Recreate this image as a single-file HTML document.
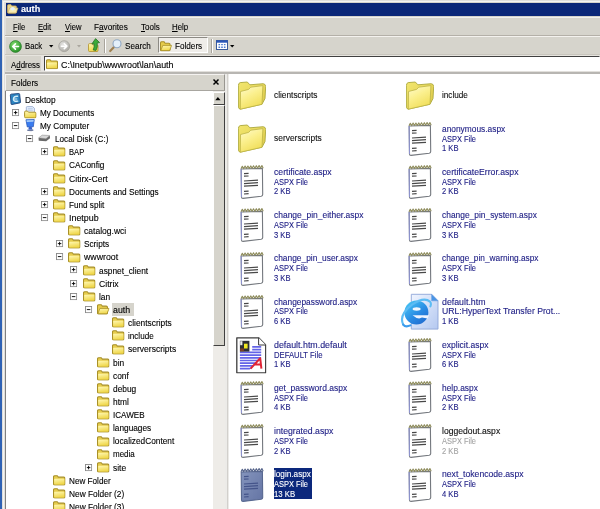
<!DOCTYPE html>
<html><head><meta charset="utf-8"><title>auth</title>
<style>
*{box-sizing:border-box;margin:0;padding:0}
html,body{width:600px;height:509px;overflow:hidden}
body{position:relative;background:#d6d4cc;font-family:"Liberation Sans",sans-serif;font-size:9px;color:#000;line-height:1}
#w{position:absolute;left:0;top:0;width:600px;height:509px;will-change:transform}
.a{position:absolute}
.t{-webkit-text-stroke:0.12px;position:absolute;white-space:pre;line-height:10px;height:10px;transform-origin:0 50%}
svg{position:absolute;overflow:visible}
u{text-decoration:underline;text-underline-offset:1px}
</style></head>
<body>
<div id="w">
<svg width="0" height="0" style="left:0;top:0">
<defs>
<linearGradient id="gf" x1="0" y1="0" x2="0.3" y2="1"><stop offset="0" stop-color="#fff8b4"/><stop offset="1" stop-color="#f0d84e"/></linearGradient>
<linearGradient id="gF" x1="0" y1="0" x2="0.5" y2="1"><stop offset="0" stop-color="#fffbd0"/><stop offset="0.5" stop-color="#fbf08e"/><stop offset="1" stop-color="#f1df5c"/></linearGradient>
<linearGradient id="gB" x1="0" y1="0" x2="1" y2="1"><stop offset="0" stop-color="#f2e66e"/><stop offset="1" stop-color="#dcc848"/></linearGradient>
<linearGradient id="gP" x1="0" y1="0" x2="1" y2="1"><stop offset="0" stop-color="#f0f5ff"/><stop offset="1" stop-color="#b4c8f0"/></linearGradient>
<linearGradient id="gE" x1="0.1" y1="0" x2="0.9" y2="1"><stop offset="0" stop-color="#48c8f4"/><stop offset="0.55" stop-color="#2a8ce4"/><stop offset="1" stop-color="#1f66cc"/></linearGradient>
<linearGradient id="gS" x1="0" y1="0" x2="1" y2="1"><stop offset="0" stop-color="#8494bc"/><stop offset="1" stop-color="#6474a4"/></linearGradient>
<radialGradient id="gg" cx="0.4" cy="0.35" r="0.7"><stop offset="0" stop-color="#86e070"/><stop offset="1" stop-color="#1f8a22"/></radialGradient>
<radialGradient id="gy" cx="0.4" cy="0.35" r="0.7"><stop offset="0" stop-color="#e6e6e4"/><stop offset="1" stop-color="#a8a6a0"/></radialGradient>
<symbol id="fs" viewBox="0 0 13 11"><path d="M0.5 2.2 Q0.5 0.7 1.9 0.7 L4.4 0.7 L5.6 2.2 L11.2 2.2 Q12.5 2.2 12.5 3.5 L12.5 9 Q12.5 10.5 11.1 10.5 L1.9 10.5 Q0.5 10.5 0.5 9 Z" fill="#e6cc4c" stroke="#a89028" stroke-width="1.1"/><path d="M1.2 4.6 Q1.2 3.8 2 3.8 L11 3.8 Q11.8 3.8 11.8 4.6 L11.8 9 Q11.8 9.8 11 9.8 L2 9.8 Q1.2 9.8 1.2 9 Z" fill="url(#gf)"/></symbol>
<symbol id="fo" viewBox="0 0 13 11"><path d="M0.5 2.2 Q0.5 0.7 1.9 0.7 L4.4 0.7 L5.6 2.2 L9.6 2.2 Q10.9 2.2 10.9 3.5 L10.9 9 Q10.9 10.5 9.5 10.5 L1.9 10.5 Q0.5 10.5 0.5 9 Z" fill="#e6cc4c" stroke="#a89028" stroke-width="1.1"/><path d="M3 4.6 L12.6 4.6 L10.4 10.2 L0.9 10.2 Z" fill="url(#gf)" stroke="#a89028" stroke-width="0.8" stroke-linejoin="round"/></symbol>
<symbol id="fl" viewBox="0 0 28 29"><path d="M0.4 4.4 Q0.5 2 2.2 1.6 L9.3 1 L11.9 3.8 L25.2 2.7 Q27.5 2.9 27.7 5.4 L27 17.5 L24 23.2 L2.2 28.2 Q0.5 27.4 0.4 26.4 Z" fill="url(#gB)" stroke="#aca83c" stroke-width="0.9" stroke-linejoin="round"/><path d="M2.5 10.5 L10.6 8.4 L12.8 6.2 L24.9 4.6 L24 23.3 L2.3 28.2 Z" fill="url(#gF)" stroke="#bcb448" stroke-width="0.8" stroke-linejoin="round"/></symbol>
<symbol id="np" viewBox="0 0 24 34"><path d="M1.2 4 L22.4 3.4 L22.7 29.6 Q22.7 31 21.2 31.3 L3 33.4 Q1.5 33.4 1.5 32 Z" fill="#fff" stroke="#74787e" stroke-width="1.1" stroke-linejoin="round"/><path d="M1.1 4 L1.5 32" stroke="#8c92cc" stroke-width="1.1"/><path d="M1 3.8 l1.3 -2.6 l1.4 2.4 l1.4 -2.5 l1.4 2.4 l1.4 -2.5 l1.4 2.4 l1.4 -2.5 l1.4 2.4 l1.4 -2.5 l1.4 2.4 l1.4 -2.5 l1.4 2.4 l1.4 -2.5 l1.4 2.4 l1.4 -2.4 l1.3 2.6" stroke="#8e8c5c" stroke-width="1.1" fill="none" stroke-linejoin="round"/><path d="M4 8.6 l4.6 -0.2 M4 11.2 l4.6 -0.2 M4 16 l14 -0.9 M4 18.6 l14 -0.9 M4 21.2 l14 -0.9 M4 26.4 l4.6 -0.3 M4 29 l4.6 -0.3" stroke="#484848" stroke-width="1.25" fill="none"/></symbol>
<symbol id="nps" viewBox="0 0 24 34"><path d="M1.2 4 L22.4 3.4 L22.7 29.6 Q22.7 31 21.2 31.3 L3 33.4 Q1.5 33.4 1.5 32 Z" fill="url(#gS)" stroke="#586890" stroke-width="1.1" stroke-linejoin="round"/><path d="M1 3.8 l1.3 -2.6 l1.4 2.4 l1.4 -2.5 l1.4 2.4 l1.4 -2.5 l1.4 2.4 l1.4 -2.5 l1.4 2.4 l1.4 -2.5 l1.4 2.4 l1.4 -2.5 l1.4 2.4 l1.4 -2.5 l1.4 2.4 l1.4 -2.4 l1.3 2.6" stroke="#56648a" stroke-width="1.1" fill="none" stroke-linejoin="round"/><path d="M4 8.6 l4.6 -0.2 M4 11.2 l4.6 -0.2 M4 16 l14 -0.9 M4 18.6 l14 -0.9 M4 21.2 l14 -0.9 M4 26.4 l4.6 -0.3 M4 29 l4.6 -0.3" stroke="#44548a" stroke-width="1.25" fill="none"/></symbol>
<symbol id="pl" viewBox="0 0 7 7"><rect x="0.5" y="0.5" width="6" height="6" fill="#fff" stroke="#8a8a8a" stroke-width="0.9"/><path d="M1.8 3.5 h3.4 M3.5 1.8 v3.4" stroke="#000" stroke-width="0.9"/></symbol>
<symbol id="mi" viewBox="0 0 7 7"><rect x="0.5" y="0.5" width="6" height="6" fill="#fff" stroke="#8a8a8a" stroke-width="0.9"/><path d="M1.8 3.5 h3.4" stroke="#000" stroke-width="0.9"/></symbol>
<symbol id="desk" viewBox="0 0 13 13"><path d="M1.4 2.2 Q1.3 1.4 2.2 1.2 L10 0.5 Q10.9 0.5 11 1.4 L11.9 9.2 Q12 10 11.2 10.2 L3 11.9 Q2.2 12 2.1 11.2 Z" fill="#2c84c0" stroke="#1c3f78" stroke-width="0.9" stroke-linejoin="round"/><path d="M8.8 3.4 Q4.6 3.2 4.6 6.4 Q4.8 9.2 9 8.4" stroke="#d4eefa" stroke-width="1.5" fill="none" stroke-linecap="round"/><path d="M5 6.2 H8.6" stroke="#d4eefa" stroke-width="1.1"/></symbol>
<symbol id="docs" viewBox="0 0 13 13"><path d="M2.4 1.4 Q2.4 0.6 3.4 0.6 L8.8 0.6 L10.8 2.4 V8 H2.4 Z" fill="#e4eefc" stroke="#90a4cc" stroke-width="0.8"/><path d="M4 2.8 H9 M4 4.4 H9" stroke="#a8bce0" stroke-width="0.7"/><path d="M0.6 6.4 Q0.6 5.2 1.8 5.2 L3.6 5.2 L4.6 6.4 L11.2 6.4 Q12.4 6.4 12.4 7.6 L12.4 11 Q12.4 12.3 11.2 12.3 L1.8 12.3 Q0.6 12.3 0.6 11 Z" fill="url(#gf)" stroke="#a89028" stroke-width="1"/></symbol>
<symbol id="comp" viewBox="0 0 13 13"><path d="M2 0.8 L10.6 0.6 L9.6 8 L3.4 8.2 Z" fill="#3a7cf0" stroke="#2858b8" stroke-width="0.8" stroke-linejoin="round"/><path d="M2.6 1.2 L10 1 L9.8 2.8 L2.9 3 Z" fill="#a8ccf8"/><path d="M5 8.2 L4.4 11 H8.6 L8 8.2 Z" fill="#3a62c8"/><path d="M3.2 11.4 Q6.4 12.8 9.6 11.2" stroke="#6c7aa0" stroke-width="1.2" fill="none"/></symbol>
<symbol id="disk" viewBox="0 0 13 13"><path d="M0.6 6.4 L4.4 3.6 L12.2 4 L12.4 6.4 L8.4 9.6 L0.8 9 Z" fill="#6a6a6a"/><path d="M0.6 6 L4.4 3.2 L12.2 3.6 L8.2 7 Z" fill="#d8d8d8" stroke="#8a8a8a" stroke-width="0.5"/></symbol>
<symbol id="ie" viewBox="0 0 40 38"><path d="M11.3 1.3 H31.6 L38 7.8 V36.1 H11.3 Z" fill="url(#gP)" stroke="#8ea6d8" stroke-width="0.9"/><path d="M31.6 1.3 V7.8 H38 Z" fill="#4a94e4" stroke="#6aa0e0" stroke-width="0.6"/><circle cx="16.4" cy="19.6" r="12" fill="url(#gE)"/><ellipse cx="16.6" cy="16" rx="4" ry="1.7" fill="#f2f8ff"/><path d="M12.6 22.2 H29 L27.6 25.4 L22 24.6 Q18 27 12.6 22.2 Z" fill="#eef4ff"/><path d="M28.8 22 L40 21 L40 27 L27.4 25.6 Z" fill="url(#gP)" opacity="0"/><path d="M3.2 31.6 Q-1.5 22 12 11.6 Q24 3.4 30 8.6 Q31.6 10.4 30.4 13.4" fill="none" stroke="#5cbcf4" stroke-width="2.1" stroke-linecap="round"/><path d="M3.2 31.6 Q5.4 34.6 10.4 32.4" fill="none" stroke="#3c9cec" stroke-width="2.1" stroke-linecap="round"/></symbol>
<symbol id="df" viewBox="0 0 30.5 36.6"><path d="M0.8 0.8 H22.6 L29.7 8 V35.8 H0.8 Z" fill="#fff" stroke="#3c3c3c" stroke-width="1.3" stroke-linejoin="round"/><path d="M22.6 0.8 V8 H29.7" fill="#fff" stroke="#3c3c3c" stroke-width="1"/><path d="M16.2 9.9 H25.2 M16.2 12.6 H25.2 M3.9 15.3 H25.2 M3.9 18.1 H25.2 M3.9 20.8 H25.2 M3.9 23.5 H25.2 M3.9 26.2 H25.2 M3.9 28.9 H25.2 M3.9 31.7 H25.2 " stroke="#6464e8" stroke-width="1.7"/><path d="M13 33.6 L27 19 L27.4 33.6 Z" fill="#fff"/><rect x="3.9" y="3.8" width="9.5" height="10.8" fill="#2c2c34"/><rect x="8" y="6.7" width="3.6" height="4.8" fill="#f0e820"/><rect x="4.2" y="4.2" width="2.2" height="4" fill="#e8e8e8"/><rect x="4.1" y="11.4" width="3.8" height="2.8" fill="#7c4020"/><path d="M14.6 31.6 L24.2 21.2 L25.4 31.6 M18.6 27.6 H25" stroke="#e02436" stroke-width="2" fill="none" stroke-linejoin="round"/></symbol>
</defs></svg>
<div class="a" style="left:0px;top:0px;width:1.5px;height:509px;background:#2f62b4;"></div>
<div class="a" style="left:1.5px;top:0px;width:4px;height:509px;background:#e0dfdc;"></div>
<div class="a" style="left:1.5px;top:0px;width:598.5px;height:2.4px;background:#e0dfdc;"></div>
<div class="a" style="left:2.6px;top:1px;width:597.4px;height:1px;background:#f4f4f2;"></div>
<div class="a" style="left:2.6px;top:1px;width:1.2px;height:508px;background:#f4f4f2;"></div>
<div class="a" style="left:5.5px;top:2.5px;width:594.5px;height:13.5px;background:#0b2778;"></div>
<div class="t" style="left:21.1px;top:4px;transform:scaleX(0.928);color:#fff;font-weight:bold;font-size:9.8px">auth</div>
<svg style="left:7px;top:4px" width="11.4" height="9.6" viewBox="0 0 13 11"><path d="M0.5 2.2 Q0.5 0.7 1.9 0.7 L4.4 0.7 L5.6 2.2 L9.6 2.2 Q10.9 2.2 10.9 3.5 L10.9 9 Q10.9 10.5 9.5 10.5 L1.9 10.5 Q0.5 10.5 0.5 9 Z" fill="#ecd88c" stroke="#c8a85c" stroke-width="0.9"/><path d="M3 4.6 L12.6 4.6 L10.4 10.2 L0.9 10.2 Z" fill="#f6eab0" stroke="#d0b060" stroke-width="0.7" stroke-linejoin="round"/><ellipse cx="6.4" cy="5.4" rx="2.6" ry="2" fill="#e4f0fc"/></svg>
<div class="a" style="left:5.5px;top:17px;width:594.5px;height:1.2px;background:#f2f1ee;"></div>
<div class="t" style="left:13.3px;top:22.4px;transform:scaleX(0.840);"><u>F</u>ile</div>
<div class="t" style="left:38.2px;top:22.4px;transform:scaleX(0.850);"><u>E</u>dit</div>
<div class="t" style="left:64.7px;top:22.4px;transform:scaleX(0.847);"><u>V</u>iew</div>
<div class="t" style="left:93.5px;top:22.4px;transform:scaleX(0.913);">F<u>a</u>vorites</div>
<div class="t" style="left:141.05px;top:22.4px;transform:scaleX(0.890);"><u>T</u>ools</div>
<div class="t" style="left:172.3px;top:22.4px;transform:scaleX(0.875);"><u>H</u>elp</div>
<div class="a" style="left:5px;top:35px;width:595px;height:1px;background:#b4b0a8;"></div>
<div class="a" style="left:5px;top:36px;width:595px;height:1px;background:#f4f2ee;"></div>
<div class="a" style="left:5px;top:53.5px;width:595px;height:1px;background:#c8c5bd;"></div>
<div class="a" style="left:5px;top:54.5px;width:595px;height:1px;background:#e6e4de;"></div>
<svg style="left:8.5px;top:39.5px" width="13" height="13" viewBox="0 0 14 14"><circle cx="7" cy="7" r="6.4" fill="url(#gg)" stroke="#2c7a2c" stroke-width="0.7"/><path d="M10.2 7 H4.6 M6.9 4.2 L4 7 L6.9 9.8" stroke="#fff" stroke-width="1.8" fill="none" stroke-linecap="round" stroke-linejoin="round"/></svg>
<div class="t" style="left:24.6px;top:41px;transform:scaleX(0.859);">Back</div>
<svg style="left:48.6px;top:44.8px" width="4.4" height="2.6" viewBox="0 0 5 3"><path d="M0 0 H5 L2.5 3 Z" fill="#000"/></svg>
<svg style="left:58.3px;top:39.8px" width="12.4" height="12.4" viewBox="0 0 14 14"><circle cx="7" cy="7" r="6.2" fill="url(#gy)" stroke="#9c9a94" stroke-width="0.7"/><path d="M3.8 7 H9.4 M7.1 4.2 L10 7 L7.1 9.8" stroke="#fff" stroke-width="1.8" fill="none" stroke-linecap="round" stroke-linejoin="round"/></svg>
<svg style="left:77.2px;top:44.8px" width="4" height="2.4" viewBox="0 0 5 3"><path d="M0 0 H5 L2.5 3 Z" fill="#aaa69e"/></svg>
<svg style="left:87.6px;top:38.2px" width="12" height="14" viewBox="0 0 12 14"><path d="M0.5 6.6 Q0.5 5.6 1.5 5.6 L3.8 5.6 L4.8 6.8 L9 6.8 Q10 6.8 10 7.8 L10 12.5 Q10 13.5 9 13.5 L1.5 13.5 Q0.5 13.5 0.5 12.5 Z" fill="url(#gf)" stroke="#b0902c" stroke-width="0.8"/><path d="M5.2 12 Q6.6 9 6 5.6 L3.8 6 L7.6 0.6 L11.6 4.6 L9.2 5 Q10 9 8 12.4 Z" fill="#3cab3a" stroke="#1f6a1f" stroke-width="0.7"/></svg>
<div class="a" style="left:104.3px;top:38.5px;width:1px;height:14px;background:#a8a49c;"></div>
<div class="a" style="left:105.3px;top:38.5px;width:1px;height:14px;background:#fff;"></div>
<svg style="left:109.3px;top:38.6px" width="13" height="13" viewBox="0 0 13 13"><path d="M1.2 12 L5.5 7.6" stroke="#a08050" stroke-width="2.2" stroke-linecap="round"/><circle cx="8" cy="4.8" r="4" fill="#e4f0fa" stroke="#90a8c4" stroke-width="1.1"/></svg>
<div class="t" style="left:124.8px;top:41px;transform:scaleX(0.901);">Search</div>
<div class="a" style="left:157.5px;top:37px;width:50px;height:16px;background:#efede9;border:1px solid;border-color:#8c8a84 #fff #fff #8c8a84"></div>
<svg style="left:159.5px;top:41px" width="12" height="10.5"><use href="#fo" width="12" height="10.5"/></svg>
<div class="t" style="left:175.3px;top:41px;transform:scaleX(0.906);">Folders</div>
<div class="a" style="left:211px;top:38.5px;width:1px;height:14px;background:#a8a49c;"></div>
<div class="a" style="left:212px;top:38.5px;width:1px;height:14px;background:#fff;"></div>
<svg style="left:216.2px;top:40px" width="12" height="10" viewBox="0 0 12 10"><rect x="0.5" y="0.5" width="11" height="9" fill="#fff" stroke="#3a5a9a" stroke-width="1"/><rect x="0.5" y="0.5" width="11" height="2.2" fill="#2a56b8"/><path d="M2.5 4.6 h1.6 M5.2 4.6 h1.6 M7.9 4.6 h1.6 M2.5 7.2 h1.6 M5.2 7.2 h1.6 M7.9 7.2 h1.6" stroke="#4a78d0" stroke-width="1.4"/></svg>
<svg style="left:229.6px;top:44.8px" width="4.4" height="2.6" viewBox="0 0 5 3"><path d="M0 0 H5 L2.5 3 Z" fill="#000"/></svg>
<div class="t" style="left:10.5px;top:59.5px;transform:scaleX(0.878);">A<u>d</u>dress</div>
<div class="a" style="left:40.8px;top:55.5px;width:3.4px;height:16px;background:#e6e4e2;"></div>
<div class="a" style="left:43.8px;top:55.7px;width:556.2px;height:15.3px;background:#fff;border:1.1px solid;border-color:#404040 #fff #fff #404040"></div>
<div class="a" style="left:5px;top:71px;width:595px;height:1px;background:#e2e0dc;"></div>
<div class="a" style="left:5px;top:72px;width:595px;height:2px;background:#b8b6b2;"></div>
<svg style="left:46px;top:59px" width="12" height="10.3"><use href="#fs" width="12" height="10.3"/></svg>
<div class="t" style="left:60.5px;top:59.6px;transform:scaleX(0.991);">C:\Inetpub\wwwroot\lan\auth</div>
<div class="a" style="left:5px;top:74px;width:220px;height:16.8px;background:#d6d4cc;border:1px solid;border-color:#f4f2f0 #989690 #a8a6a0 #f4f2f0"></div>
<div class="t" style="left:11.1px;top:78.4px;transform:scaleX(0.906);">Folders</div>
<svg style="left:213.2px;top:79px" width="6" height="6" viewBox="0 0 6 6"><path d="M0.5 0.5 L5.5 5.5 M5.5 0.5 L0.5 5.5" stroke="#000" stroke-width="1.45"/></svg>
<div class="a" style="left:5px;top:91px;width:207.5px;height:418px;background:#fff;border-left:1px solid #808080"></div>
<div class="a" style="left:212.5px;top:91px;width:12px;height:418px;background:#eeece8;"></div>
<div class="a" style="left:212.5px;top:92px;width:12px;height:12.5px;background:#d6d4cc;border:1px solid;border-color:#fff #404040 #404040 #fff"></div>
<svg style="left:215.3px;top:97.4px" width="5.8" height="3.2" viewBox="0 0 5 3"><path d="M0 3 H5 L2.5 0 Z" fill="#000"/></svg>
<div class="a" style="left:212.5px;top:104.5px;width:12px;height:241px;background:#d6d4cc;border:1px solid;border-color:#fff #404040 #404040 #fff"></div>
<div class="a" style="left:225px;top:74px;width:4.2px;height:435px;background:#ecebe8;"></div>
<div class="a" style="left:227px;top:74px;width:1px;height:435px;background:#d2d0cc;"></div>
<div class="a" style="left:229.2px;top:74px;width:370.8px;height:435px;background:#fff;"></div>
<svg style="left:8.9px;top:93px" width="12.6" height="12.6"><use href="#desk" width="12.6" height="12.6"/></svg>
<div class="t" style="left:25.1px;top:94.7px;transform:scaleX(0.926);">Desktop</div>
<svg style="left:11.6px;top:108.74px" width="7.2" height="7.2"><use href="#pl" width="7.2" height="7.2"/></svg>
<svg style="left:23.6px;top:106.14px" width="12.6" height="12.6"><use href="#docs" width="12.6" height="12.6"/></svg>
<div class="t" style="left:39.8px;top:107.84px;transform:scaleX(0.903);">My Documents</div>
<svg style="left:11.6px;top:121.88px" width="7.2" height="7.2"><use href="#mi" width="7.2" height="7.2"/></svg>
<svg style="left:23.6px;top:119.28px" width="12.6" height="12.6"><use href="#comp" width="12.6" height="12.6"/></svg>
<div class="t" style="left:39.8px;top:120.98px;transform:scaleX(0.911);">My Computer</div>
<svg style="left:26.3px;top:135.02px" width="7.2" height="7.2"><use href="#mi" width="7.2" height="7.2"/></svg>
<svg style="left:38.3px;top:132.42px" width="12.6" height="12.6"><use href="#disk" width="12.6" height="12.6"/></svg>
<div class="t" style="left:54.5px;top:134.12px;transform:scaleX(0.905);">Local Disk (C:)</div>
<svg style="left:41px;top:148.16px" width="7.2" height="7.2"><use href="#pl" width="7.2" height="7.2"/></svg>
<svg style="left:53.3px;top:146.46px" width="12.5" height="10.6"><use href="#fs" width="12.5" height="10.6"/></svg>
<div class="t" style="left:69.2px;top:147.26px;transform:scaleX(0.844);">BAP</div>
<svg style="left:53.3px;top:159.6px" width="12.5" height="10.6"><use href="#fs" width="12.5" height="10.6"/></svg>
<div class="t" style="left:69.2px;top:160.4px;transform:scaleX(0.919);">CAConfig</div>
<svg style="left:53.3px;top:172.74px" width="12.5" height="10.6"><use href="#fs" width="12.5" height="10.6"/></svg>
<div class="t" style="left:69.2px;top:173.54px;transform:scaleX(0.956);">Citirx-Cert</div>
<svg style="left:41px;top:187.58px" width="7.2" height="7.2"><use href="#pl" width="7.2" height="7.2"/></svg>
<svg style="left:53.3px;top:185.88px" width="12.5" height="10.6"><use href="#fs" width="12.5" height="10.6"/></svg>
<div class="t" style="left:69.2px;top:186.68px;transform:scaleX(0.915);">Documents and Settings</div>
<svg style="left:41px;top:200.72px" width="7.2" height="7.2"><use href="#pl" width="7.2" height="7.2"/></svg>
<svg style="left:53.3px;top:199.02px" width="12.5" height="10.6"><use href="#fs" width="12.5" height="10.6"/></svg>
<div class="t" style="left:69.2px;top:199.82px;transform:scaleX(0.907);">Fund split</div>
<svg style="left:41px;top:213.86px" width="7.2" height="7.2"><use href="#mi" width="7.2" height="7.2"/></svg>
<svg style="left:53.3px;top:212.16px" width="12.5" height="10.6"><use href="#fs" width="12.5" height="10.6"/></svg>
<div class="t" style="left:69.2px;top:212.96px;transform:scaleX(0.989);">Inetpub</div>
<svg style="left:68px;top:225.3px" width="12.5" height="10.6"><use href="#fs" width="12.5" height="10.6"/></svg>
<div class="t" style="left:83.9px;top:226.1px;transform:scaleX(0.948);">catalog.wci</div>
<svg style="left:55.7px;top:240.14px" width="7.2" height="7.2"><use href="#pl" width="7.2" height="7.2"/></svg>
<svg style="left:68px;top:238.44px" width="12.5" height="10.6"><use href="#fs" width="12.5" height="10.6"/></svg>
<div class="t" style="left:83.9px;top:239.24px;transform:scaleX(0.916);">Scripts</div>
<svg style="left:55.7px;top:253.28px" width="7.2" height="7.2"><use href="#mi" width="7.2" height="7.2"/></svg>
<svg style="left:68px;top:251.58px" width="12.5" height="10.6"><use href="#fs" width="12.5" height="10.6"/></svg>
<div class="t" style="left:83.9px;top:252.38px;transform:scaleX(0.977);">wwwroot</div>
<svg style="left:70.4px;top:266.42px" width="7.2" height="7.2"><use href="#pl" width="7.2" height="7.2"/></svg>
<svg style="left:82.7px;top:264.72px" width="12.5" height="10.6"><use href="#fs" width="12.5" height="10.6"/></svg>
<div class="t" style="left:98.6px;top:265.52px;transform:scaleX(0.927);">aspnet_client</div>
<svg style="left:70.4px;top:279.56px" width="7.2" height="7.2"><use href="#pl" width="7.2" height="7.2"/></svg>
<svg style="left:82.7px;top:277.86px" width="12.5" height="10.6"><use href="#fs" width="12.5" height="10.6"/></svg>
<div class="t" style="left:98.6px;top:278.66px;transform:scaleX(0.961);">Citrix</div>
<svg style="left:70.4px;top:292.7px" width="7.2" height="7.2"><use href="#mi" width="7.2" height="7.2"/></svg>
<svg style="left:82.7px;top:291px" width="12.5" height="10.6"><use href="#fs" width="12.5" height="10.6"/></svg>
<div class="t" style="left:98.6px;top:291.8px;transform:scaleX(0.932);">lan</div>
<svg style="left:85.1px;top:305.84px" width="7.2" height="7.2"><use href="#mi" width="7.2" height="7.2"/></svg>
<svg style="left:97.4px;top:304.14px" width="12.5" height="10.6"><use href="#fo" width="12.5" height="10.6"/></svg>
<div class="a" style="left:112px;top:303.04px;width:21.8px;height:12.6px;background:#d6d4cc;"></div>
<div class="t" style="left:113.3px;top:304.94px;transform:scaleX(0.981);">auth</div>
<svg style="left:112.1px;top:317.28px" width="12.5" height="10.6"><use href="#fs" width="12.5" height="10.6"/></svg>
<div class="t" style="left:128px;top:318.08px;transform:scaleX(0.929);">clientscripts</div>
<svg style="left:112.1px;top:330.42px" width="12.5" height="10.6"><use href="#fs" width="12.5" height="10.6"/></svg>
<div class="t" style="left:128px;top:331.22px;transform:scaleX(0.901);">include</div>
<svg style="left:112.1px;top:343.56px" width="12.5" height="10.6"><use href="#fs" width="12.5" height="10.6"/></svg>
<div class="t" style="left:128px;top:344.36px;transform:scaleX(0.945);">serverscripts</div>
<svg style="left:97.4px;top:356.7px" width="12.5" height="10.6"><use href="#fs" width="12.5" height="10.6"/></svg>
<div class="t" style="left:113.3px;top:357.5px;transform:scaleX(0.932);">bin</div>
<svg style="left:97.4px;top:369.84px" width="12.5" height="10.6"><use href="#fs" width="12.5" height="10.6"/></svg>
<div class="t" style="left:113.3px;top:370.64px;transform:scaleX(0.929);">conf</div>
<svg style="left:97.4px;top:382.98px" width="12.5" height="10.6"><use href="#fs" width="12.5" height="10.6"/></svg>
<div class="t" style="left:113.3px;top:383.78px;transform:scaleX(0.927);">debug</div>
<svg style="left:97.4px;top:396.12px" width="12.5" height="10.6"><use href="#fs" width="12.5" height="10.6"/></svg>
<div class="t" style="left:113.3px;top:396.92px;transform:scaleX(0.929);">html</div>
<svg style="left:97.4px;top:409.26px" width="12.5" height="10.6"><use href="#fs" width="12.5" height="10.6"/></svg>
<div class="t" style="left:113.3px;top:410.06px;transform:scaleX(0.896);">ICAWEB</div>
<svg style="left:97.4px;top:422.4px" width="12.5" height="10.6"><use href="#fs" width="12.5" height="10.6"/></svg>
<div class="t" style="left:113.3px;top:423.2px;transform:scaleX(0.919);">languages</div>
<svg style="left:97.4px;top:435.54px" width="12.5" height="10.6"><use href="#fs" width="12.5" height="10.6"/></svg>
<div class="t" style="left:113.3px;top:436.34px;transform:scaleX(0.920);">localizedContent</div>
<svg style="left:97.4px;top:448.68px" width="12.5" height="10.6"><use href="#fs" width="12.5" height="10.6"/></svg>
<div class="t" style="left:113.3px;top:449.48px;transform:scaleX(0.889);">media</div>
<svg style="left:85.1px;top:463.52px" width="7.2" height="7.2"><use href="#pl" width="7.2" height="7.2"/></svg>
<svg style="left:97.4px;top:461.82px" width="12.5" height="10.6"><use href="#fs" width="12.5" height="10.6"/></svg>
<div class="t" style="left:113.3px;top:462.62px;transform:scaleX(0.942);">site</div>
<svg style="left:53.3px;top:474.96px" width="12.5" height="10.6"><use href="#fs" width="12.5" height="10.6"/></svg>
<div class="t" style="left:69.2px;top:475.76px;transform:scaleX(0.906);">New Folder</div>
<svg style="left:53.3px;top:488.1px" width="12.5" height="10.6"><use href="#fs" width="12.5" height="10.6"/></svg>
<div class="t" style="left:69.2px;top:488.9px;transform:scaleX(0.927);">New Folder (2)</div>
<svg style="left:53.3px;top:501.24px" width="12.5" height="10.6"><use href="#fs" width="12.5" height="10.6"/></svg>
<div class="t" style="left:69.2px;top:502.04px;transform:scaleX(0.927);">New Folder (3)</div>
<svg style="left:238px;top:81px" width="28" height="29"><use href="#fl" width="28" height="29"/></svg>
<div class="t" style="left:274.05px;top:90px;transform:scaleX(0.924);color:#111">clientscripts</div>
<svg style="left:406.3px;top:81px" width="28" height="29"><use href="#fl" width="28" height="29"/></svg>
<div class="t" style="left:442.3px;top:90px;transform:scaleX(0.908);color:#111">include</div>
<svg style="left:238px;top:124.2px" width="28" height="29"><use href="#fl" width="28" height="29"/></svg>
<div class="t" style="left:274.05px;top:133.2px;transform:scaleX(0.935);color:#111">serverscripts</div>
<svg style="left:408.3px;top:121.9px" width="24" height="34"><use href="#np" width="24" height="34"/></svg>
<div class="t" style="left:442.3px;top:123.7px;transform:scaleX(0.929);color:#1c1c84;">anonymous.aspx</div>
<div class="t" style="left:442.3px;top:133.5px;transform:scaleX(0.828);color:#1c1c84;">ASPX File</div>
<div class="t" style="left:442.3px;top:143.1px;transform:scaleX(0.843);color:#1c1c84;">1 KB</div>
<svg style="left:240px;top:165.1px" width="24" height="34"><use href="#np" width="24" height="34"/></svg>
<div class="t" style="left:274.05px;top:166.9px;transform:scaleX(0.961);color:#1c1c84;">certificate.aspx</div>
<div class="t" style="left:274.05px;top:176.7px;transform:scaleX(0.828);color:#1c1c84;">ASPX File</div>
<div class="t" style="left:274.05px;top:186.3px;transform:scaleX(0.843);color:#1c1c84;">2 KB</div>
<svg style="left:408.3px;top:165.1px" width="24" height="34"><use href="#np" width="24" height="34"/></svg>
<div class="t" style="left:442.3px;top:166.9px;transform:scaleX(0.962);color:#1c1c84;">certificateError.aspx</div>
<div class="t" style="left:442.3px;top:176.7px;transform:scaleX(0.828);color:#1c1c84;">ASPX File</div>
<div class="t" style="left:442.3px;top:186.3px;transform:scaleX(0.843);color:#1c1c84;">2 KB</div>
<svg style="left:240px;top:208.3px" width="24" height="34"><use href="#np" width="24" height="34"/></svg>
<div class="t" style="left:274.05px;top:210.1px;transform:scaleX(0.941);color:#1c1c84;">change_pin_either.aspx</div>
<div class="t" style="left:274.05px;top:219.9px;transform:scaleX(0.828);color:#1c1c84;">ASPX File</div>
<div class="t" style="left:274.05px;top:229.5px;transform:scaleX(0.843);color:#1c1c84;">3 KB</div>
<svg style="left:408.3px;top:208.3px" width="24" height="34"><use href="#np" width="24" height="34"/></svg>
<div class="t" style="left:442.3px;top:210.1px;transform:scaleX(0.934);color:#1c1c84;">change_pin_system.aspx</div>
<div class="t" style="left:442.3px;top:219.9px;transform:scaleX(0.828);color:#1c1c84;">ASPX File</div>
<div class="t" style="left:442.3px;top:229.5px;transform:scaleX(0.843);color:#1c1c84;">3 KB</div>
<svg style="left:240px;top:251.5px" width="24" height="34"><use href="#np" width="24" height="34"/></svg>
<div class="t" style="left:274.05px;top:253.3px;transform:scaleX(0.932);color:#1c1c84;">change_pin_user.aspx</div>
<div class="t" style="left:274.05px;top:263.1px;transform:scaleX(0.828);color:#1c1c84;">ASPX File</div>
<div class="t" style="left:274.05px;top:272.7px;transform:scaleX(0.843);color:#1c1c84;">3 KB</div>
<svg style="left:408.3px;top:251.5px" width="24" height="34"><use href="#np" width="24" height="34"/></svg>
<div class="t" style="left:442.3px;top:253.3px;transform:scaleX(0.923);color:#1c1c84;">change_pin_warning.aspx</div>
<div class="t" style="left:442.3px;top:263.1px;transform:scaleX(0.828);color:#1c1c84;">ASPX File</div>
<div class="t" style="left:442.3px;top:272.7px;transform:scaleX(0.843);color:#1c1c84;">3 KB</div>
<svg style="left:240px;top:294.7px" width="24" height="34"><use href="#np" width="24" height="34"/></svg>
<div class="t" style="left:274.05px;top:296.5px;transform:scaleX(0.929);color:#1c1c84;">changepassword.aspx</div>
<div class="t" style="left:274.05px;top:306.3px;transform:scaleX(0.828);color:#1c1c84;">ASPX File</div>
<div class="t" style="left:274.05px;top:315.9px;transform:scaleX(0.843);color:#1c1c84;">6 KB</div>
<svg style="left:400px;top:293.1px" width="40" height="38"><use href="#ie" width="40" height="38"/></svg>
<div class="t" style="left:442.3px;top:296.5px;transform:scaleX(0.977);color:#1c1c84;">default.htm</div>
<div class="t" style="left:442.3px;top:306.3px;transform:scaleX(0.961);color:#1c1c84;">URL:HyperText Transfer Prot...</div>
<div class="t" style="left:442.3px;top:315.9px;transform:scaleX(0.843);color:#1c1c84;">1 KB</div>
<svg style="left:236px;top:336.8px" width="30.5" height="36.6"><use href="#df" width="30.5" height="36.6"/></svg>
<div class="t" style="left:274.05px;top:339.7px;transform:scaleX(0.982);color:#1c1c84;">default.htm.default</div>
<div class="t" style="left:274.05px;top:349.5px;transform:scaleX(0.855);color:#1c1c84;">DEFAULT File</div>
<div class="t" style="left:274.05px;top:359.1px;transform:scaleX(0.843);color:#1c1c84;">1 KB</div>
<svg style="left:408.3px;top:337.9px" width="24" height="34"><use href="#np" width="24" height="34"/></svg>
<div class="t" style="left:442.3px;top:339.7px;transform:scaleX(0.948);color:#1c1c84;">explicit.aspx</div>
<div class="t" style="left:442.3px;top:349.5px;transform:scaleX(0.828);color:#1c1c84;">ASPX File</div>
<div class="t" style="left:442.3px;top:359.1px;transform:scaleX(0.843);color:#1c1c84;">6 KB</div>
<svg style="left:240px;top:381.1px" width="24" height="34"><use href="#np" width="24" height="34"/></svg>
<div class="t" style="left:274.05px;top:382.9px;transform:scaleX(0.944);color:#1c1c84;">get_password.aspx</div>
<div class="t" style="left:274.05px;top:392.7px;transform:scaleX(0.828);color:#1c1c84;">ASPX File</div>
<div class="t" style="left:274.05px;top:402.3px;transform:scaleX(0.843);color:#1c1c84;">4 KB</div>
<svg style="left:408.3px;top:381.1px" width="24" height="34"><use href="#np" width="24" height="34"/></svg>
<div class="t" style="left:442.3px;top:382.9px;transform:scaleX(0.932);color:#1c1c84;">help.aspx</div>
<div class="t" style="left:442.3px;top:392.7px;transform:scaleX(0.828);color:#1c1c84;">ASPX File</div>
<div class="t" style="left:442.3px;top:402.3px;transform:scaleX(0.843);color:#1c1c84;">2 KB</div>
<svg style="left:240px;top:424.3px" width="24" height="34"><use href="#np" width="24" height="34"/></svg>
<div class="t" style="left:274.05px;top:426.1px;transform:scaleX(0.966);color:#1c1c84;">integrated.aspx</div>
<div class="t" style="left:274.05px;top:435.9px;transform:scaleX(0.828);color:#1c1c84;">ASPX File</div>
<div class="t" style="left:274.05px;top:445.5px;transform:scaleX(0.843);color:#1c1c84;">2 KB</div>
<svg style="left:408.3px;top:424.3px" width="24" height="34"><use href="#np" width="24" height="34"/></svg>
<div class="t" style="left:442.3px;top:426.1px;transform:scaleX(0.953);color:#111;">loggedout.aspx</div>
<div class="t" style="left:442.3px;top:435.9px;transform:scaleX(0.828);color:#a4a4a4;">ASPX File</div>
<div class="t" style="left:442.3px;top:445.5px;transform:scaleX(0.843);color:#a4a4a4;">2 KB</div>
<svg style="left:240px;top:467.5px" width="24" height="34"><use href="#nps" width="24" height="34"/></svg>
<div class="a" style="left:274.2px;top:468.2px;width:37.7px;height:30.5px;background:#0c287c;"></div>
<div class="t" style="left:273.85px;top:469.3px;transform:scaleX(0.910);color:#fff;">login.aspx</div>
<div class="t" style="left:274.05px;top:479.1px;transform:scaleX(0.828);color:#fff;">ASPX File</div>
<div class="t" style="left:274.05px;top:488.7px;transform:scaleX(0.864);color:#fff;">13 KB</div>
<svg style="left:408.3px;top:467.5px" width="24" height="34"><use href="#np" width="24" height="34"/></svg>
<div class="t" style="left:442.3px;top:469.3px;transform:scaleX(0.958);color:#1c1c84;">next_tokencode.aspx</div>
<div class="t" style="left:442.3px;top:479.1px;transform:scaleX(0.828);color:#1c1c84;">ASPX File</div>
<div class="t" style="left:442.3px;top:488.7px;transform:scaleX(0.843);color:#1c1c84;">4 KB</div>
</div>
</body></html>
